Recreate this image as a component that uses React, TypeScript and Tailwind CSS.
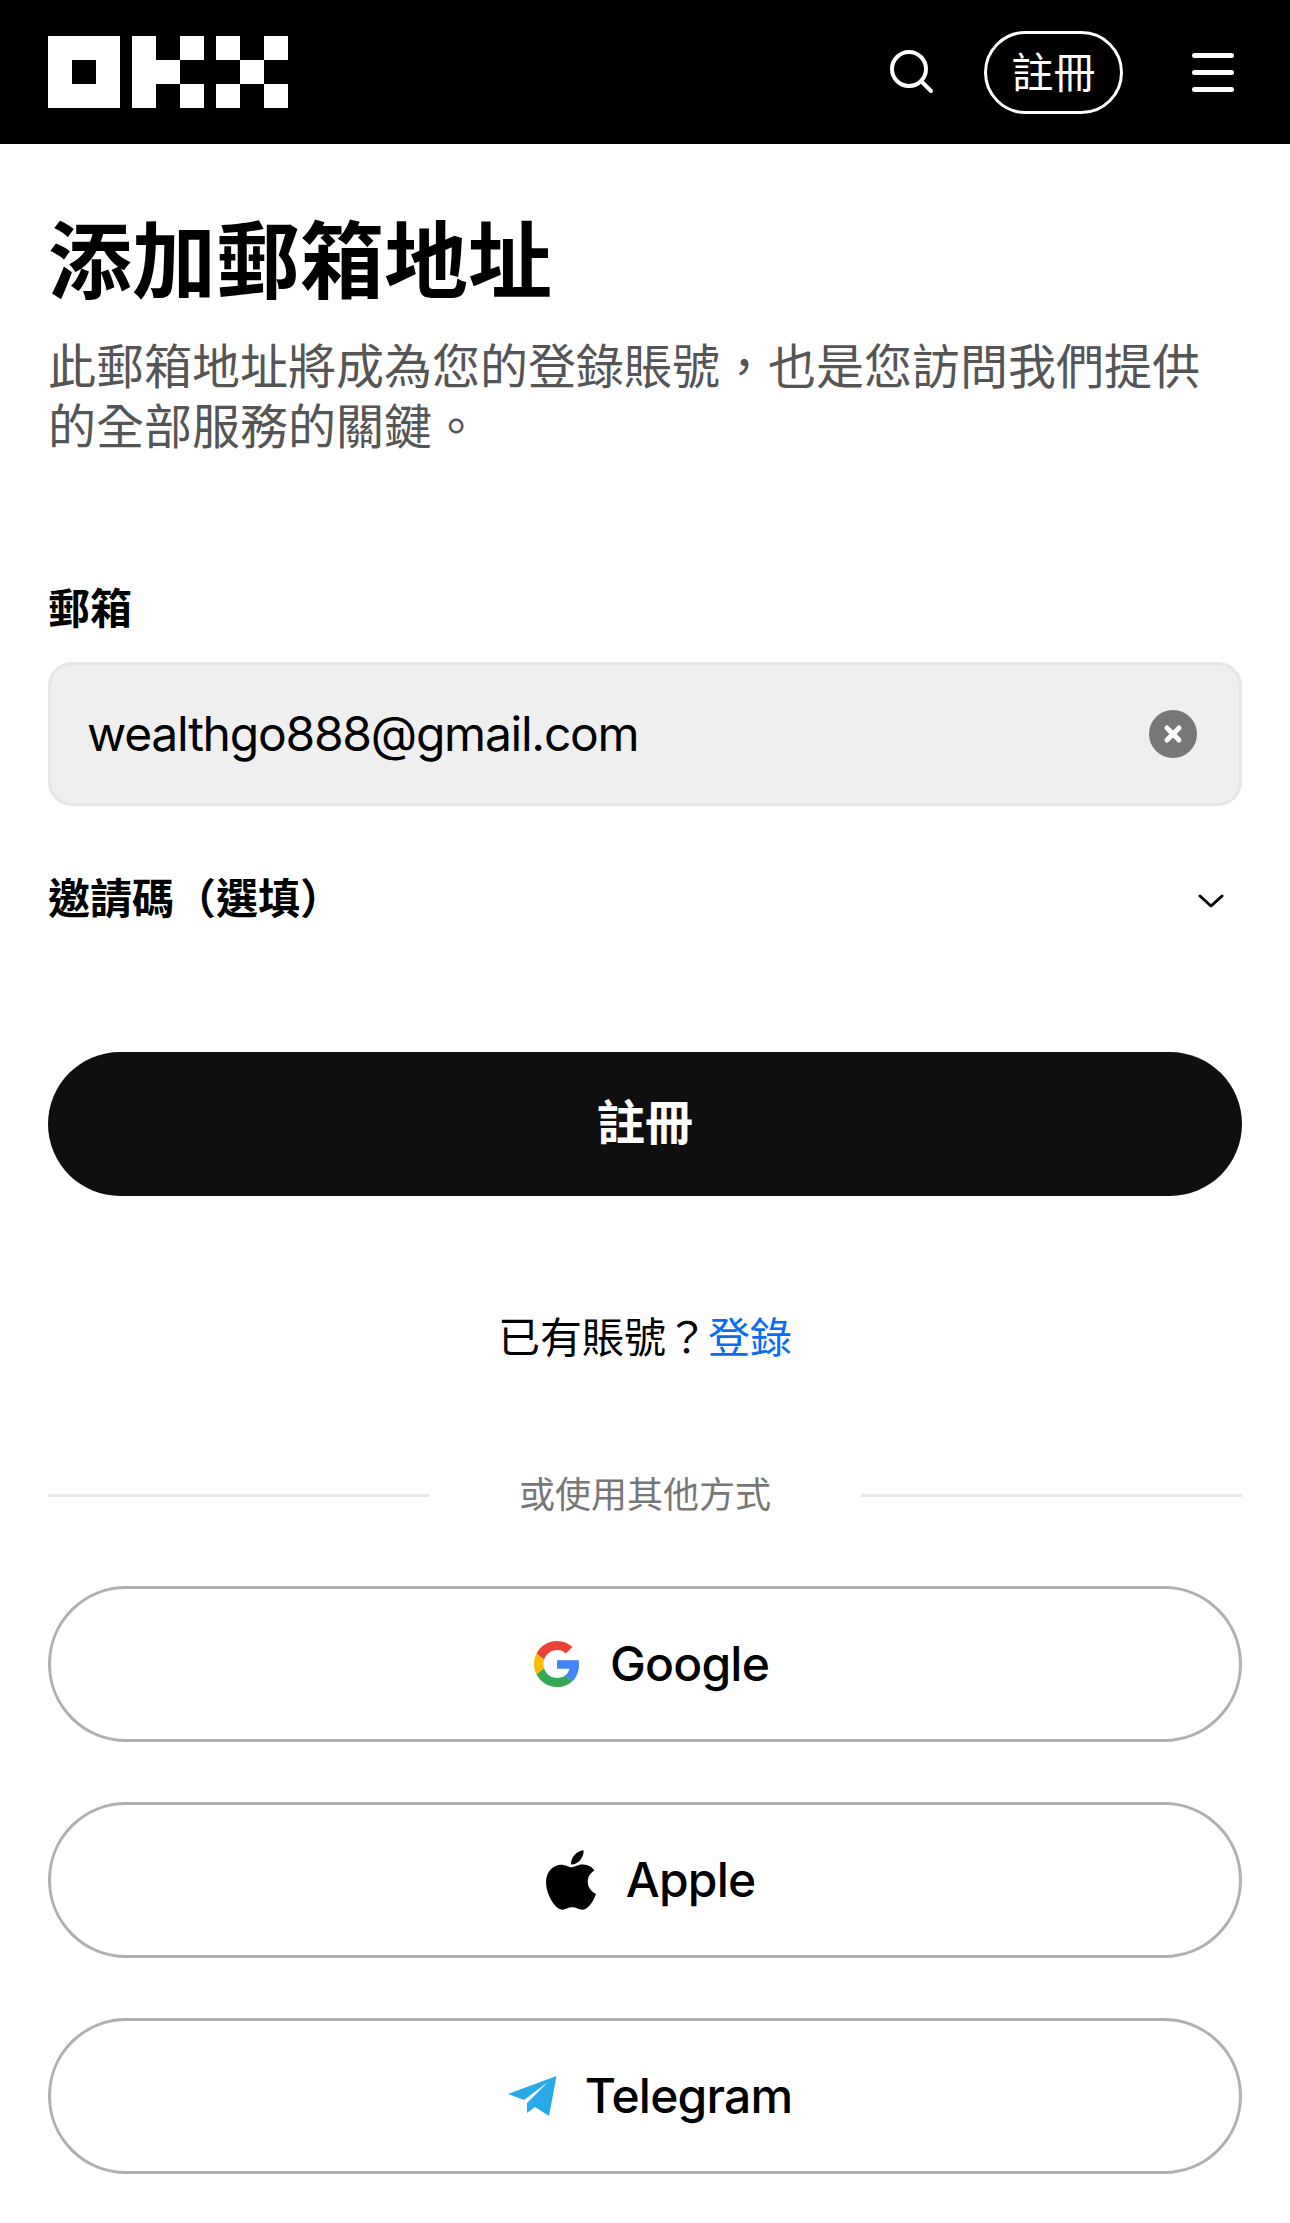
import { FaApple } from "react-icons/fa";

const cjk = "font-['Inter','Noto_Sans_CJK_TC',sans-serif]";

function Logo() {
  return (
    <svg width="240" height="72" viewBox="0 0 240 72" fill="#fff">
      <path fillRule="evenodd" d="M0 0H72V72H0ZM24 24V48H48V24Z" />
      <path d="M84 0H108V24H132V48H108V72H84Z" />
      <rect x="132" y="0" width="24" height="24" />
      <rect x="132" y="48" width="24" height="24" />
      <rect x="168" y="0" width="24" height="24" />
      <rect x="168" y="48" width="24" height="24" />
      <rect x="192" y="24" width="24" height="24" />
      <rect x="216" y="0" width="24" height="24" />
      <rect x="216" y="48" width="24" height="24" />
    </svg>
  );
}

function GoogleIcon() {
  return (
    <svg width="46" height="46" viewBox="0 0 48 48">
      <path fill="#EA4335" d="M24 9.5c3.54 0 6.71 1.22 9.21 3.6l6.85-6.85C35.9 2.38 30.47 0 24 0 14.62 0 6.51 5.38 2.56 13.22l7.98 6.19C12.43 13.72 17.74 9.5 24 9.5z" />
      <path fill="#4285F4" d="M46.98 24.55c0-1.57-.15-3.09-.38-4.55H24v9.02h12.94c-.58 2.96-2.26 5.48-4.78 7.18l7.73 6c4.51-4.18 7.09-10.36 7.09-17.65z" />
      <path fill="#FBBC05" d="M10.53 28.59c-.48-1.45-.76-2.99-.76-4.59s.27-3.14.76-4.59l-7.98-6.19C.92 16.46 0 20.12 0 24c0 3.88.92 7.54 2.56 10.78l7.97-6.19z" />
      <path fill="#34A853" d="M24 48c6.48 0 11.93-2.13 15.89-5.81l-7.73-6c-2.15 1.45-4.92 2.3-8.16 2.3-6.26 0-11.57-4.22-13.47-9.91l-7.98 6.19C6.51 42.62 14.62 48 24 48z" />
    </svg>
  );
}

function TelegramIcon() {
  return (
    <svg width="49" height="40" viewBox="0 0 49 40" fill="#29aae8">
      <path d="M48.5 0L0 18L16 24L40 6L19 27L19 37L27 31L41 40Z" />
    </svg>
  );
}

function Social({ icon, label, spacing }: { icon: React.ReactNode; label: string; spacing: string }) {
  return (
    <div className={`flex h-[156px] items-center justify-center rounded-full border-[3px] border-[#b0b0b0] ${spacing}`}>
      {icon}
      <span className="text-[48px] font-medium tracking-[-0.8px] text-black">{label}</span>
    </div>
  );
}

export default function App() {
  return (
    <div className={`min-h-[2223px] overflow-hidden bg-white ${cjk}`}>
      <header className="flex h-[144px] items-center bg-black pl-12">
        <Logo />
        <div className="ml-auto flex items-center">
          <svg width="44" height="44" viewBox="0 0 44 44" fill="none" stroke="#fff" strokeWidth="4" strokeLinecap="round">
            <circle cx="19" cy="19" r="17" />
            <path d="M32 32L41 41" />
          </svg>
          <div className="ml-[50px] flex h-[83px] w-[139px] items-center justify-center rounded-full border-[3px] border-white text-[42px] text-white">
            註冊
          </div>
          <div className="ml-[69px] mr-[56px] flex w-[42px] flex-col gap-[12px]">
            <div className="h-[5px] rounded-full bg-white" />
            <div className="h-[5px] rounded-full bg-white" />
            <div className="h-[5px] rounded-full bg-white" />
          </div>
        </div>
      </header>

      <main className="px-12">
        <h1 className="mt-[68px] text-[84px] font-bold leading-[100px] text-black">添加郵箱地址</h1>
        <p className="mt-[25px] text-[48px] leading-[60px] text-[#555555]">
          此郵箱地址將成為您的登錄賬號，也是您訪問我們提供的全部服務的關鍵。
        </p>

        <div className="mt-[122px] text-[42px] font-bold leading-[60px] text-black">郵箱</div>
        <div className="mt-[23px] flex h-[144px] items-center rounded-[24px] border-[3px] border-[#e6e6e6] bg-[#efefef] pl-[36px] pr-[42px]">
          <span className="text-[48px] tracking-[-1.25px] text-black">wealthgo888@gmail.com</span>
          <svg className="ml-auto" width="48" height="48" viewBox="0 0 48 48">
            <circle cx="24" cy="24" r="24" fill="#777777" />
            <path d="M18 18L30 30M30 18L18 30" stroke="#fff" strokeWidth="5" strokeLinecap="round" />
          </svg>
        </div>

        <div className="mt-[63px] flex items-center justify-between">
          <span className="text-[42px] font-bold leading-[60px] text-black">邀請碼（選填）</span>
          <svg className="mr-[18px] mt-[3px]" width="26" height="14" viewBox="0 0 26 14" fill="none" stroke="#000" strokeWidth="3" strokeLinecap="round" strokeLinejoin="round">
            <path d="M2 2L13 12L24 2" />
          </svg>
        </div>

        <button className="mt-[123px] flex h-[144px] w-full items-center justify-center rounded-full bg-[#0f0f0f] pb-[2px] text-[48px] font-bold text-white">
          註冊
        </button>

        <div className="mt-[112px] text-center text-[42px] leading-[60px] text-black">
          已有賬號？<span className="text-[#0a6cf1]">登錄</span>
        </div>

        <div className="mt-[102px] flex items-center gap-[90px]">
          <div className="h-[3px] flex-1 bg-[#e8e8e8]" />
          <span className="text-[36px] leading-[50px] text-[#777777]">或使用其他方式</span>
          <div className="h-[3px] flex-1 bg-[#e8e8e8]" />
        </div>

        <div className="mt-[66px] flex flex-col gap-[60px]">
          <Social icon={<GoogleIcon />} label="Google" spacing="gap-[30px] pl-[13px]" />
          <Social icon={<FaApple size={68} color="#000" />} label="Apple" spacing="gap-[21px] pl-[2px]" />
          <Social icon={<TelegramIcon />} label="Telegram" spacing="gap-[28px] pl-[10px]" />
        </div>
      </main>
    </div>
  );
}
